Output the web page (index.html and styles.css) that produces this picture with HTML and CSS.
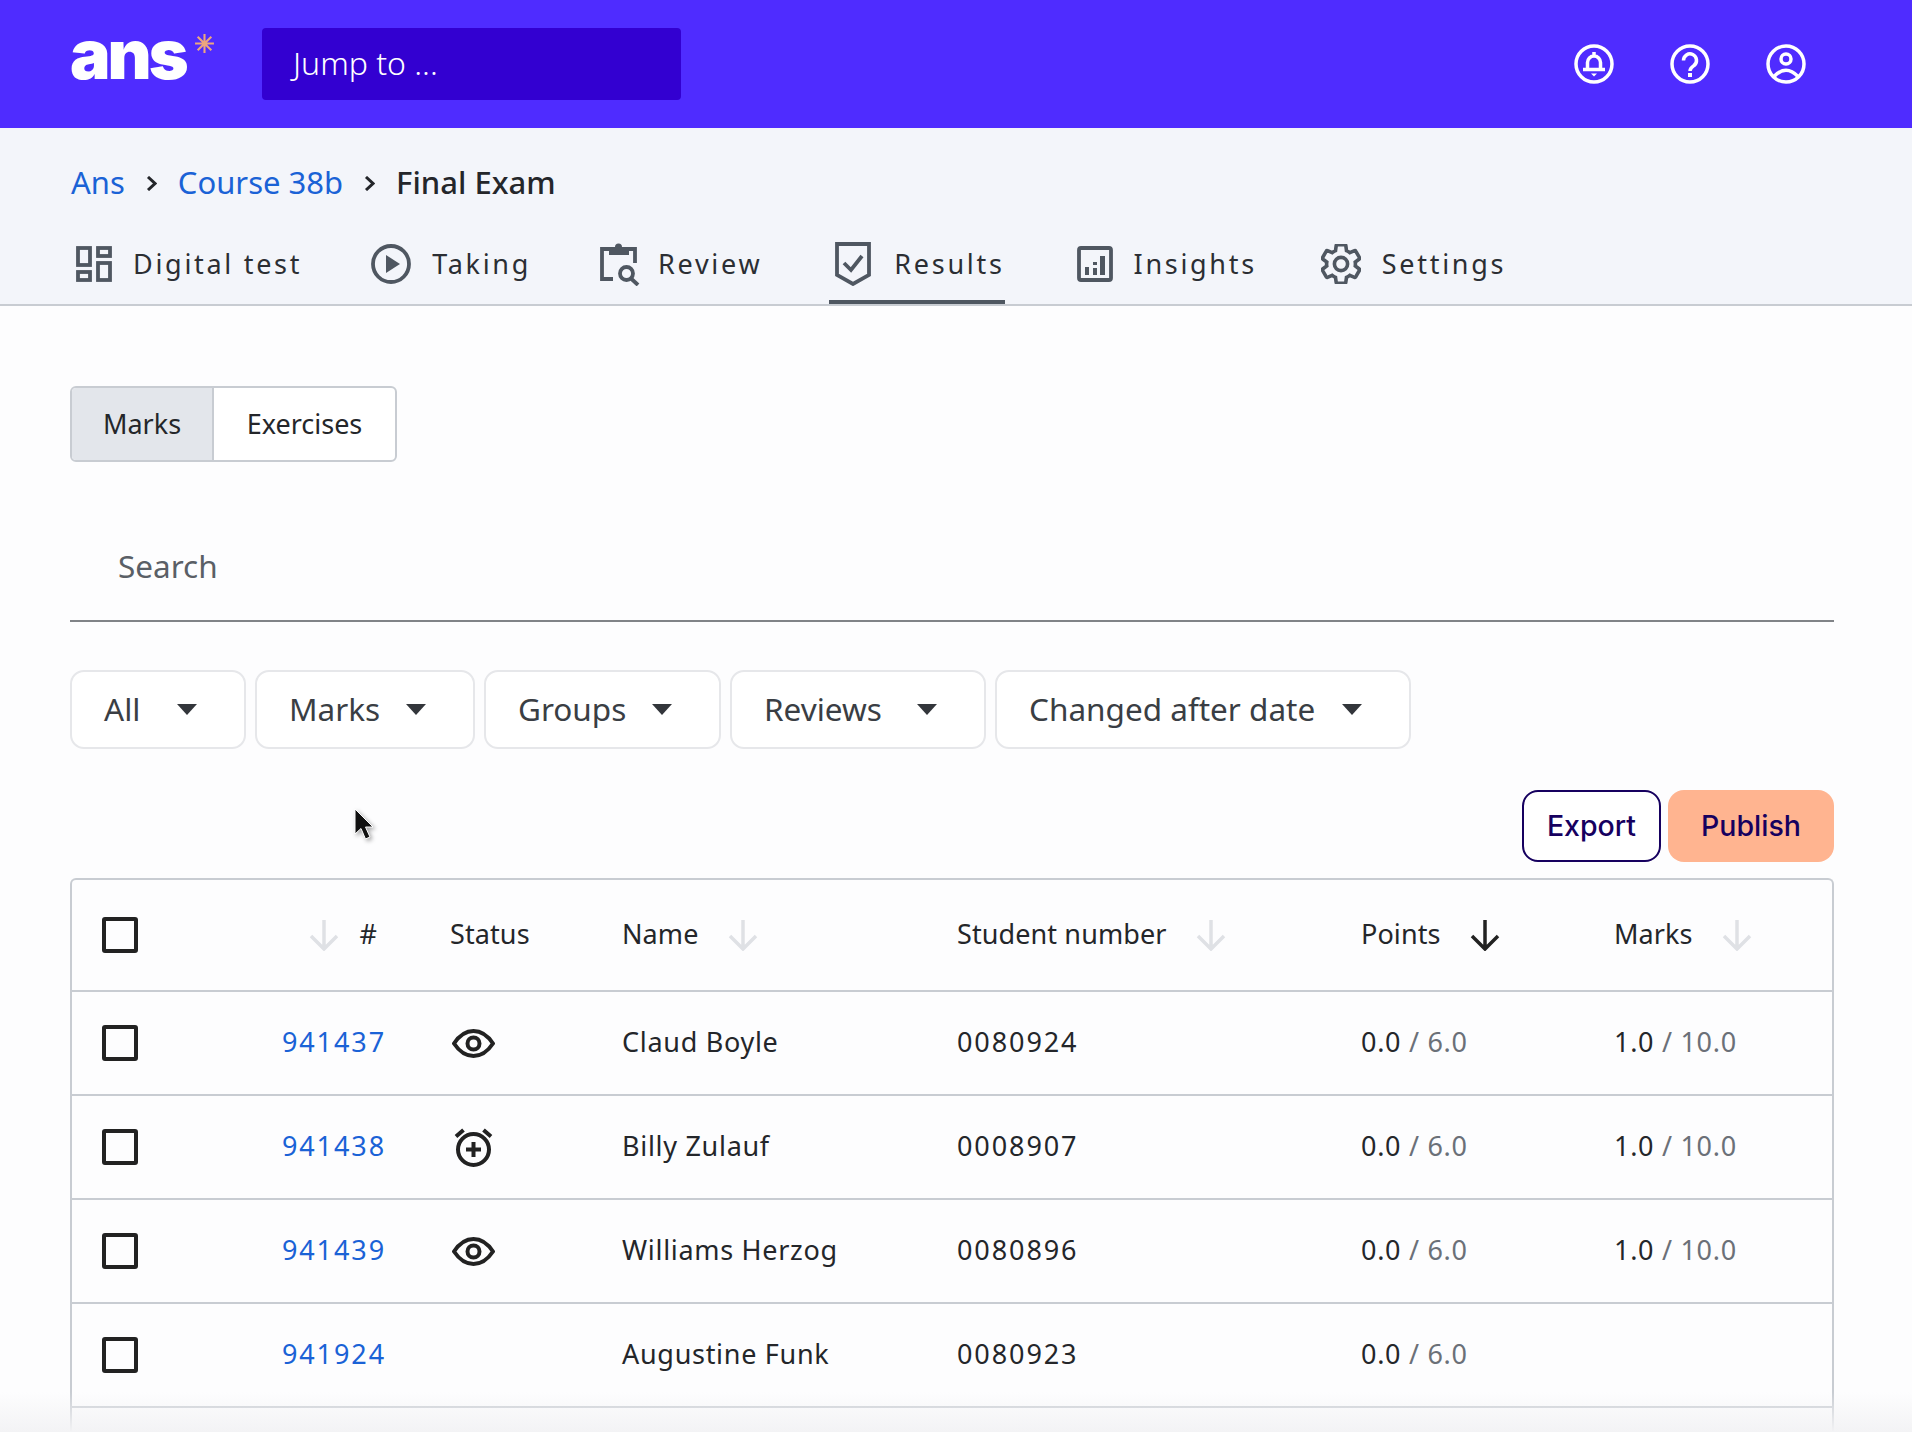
FILE: index.html
```html
<!DOCTYPE html>
<html>

<head>
    <meta charset="UTF-8">
    <link rel="stylesheet" href="styles.css">
    <title>Final Exam - Results</title>
</head>

<body>
    <header class="topbar">
        <div class="logo">
            <span class="logoText">ans</span>
            <svg class="logoStar" width="21" height="21" viewBox="0 0 20 20">
                <path d="M10 1V19M1 10H19M3.500 3.500L16.500 16.500M16.500 3.500L3.500 16.500" />
            </svg>
        </div>
        <div class="jumpTo">Jump to ...</div>
        <div class="topIcons">
            <svg width="40" height="40" viewBox="0 0 40 40">
                <circle cx="20" cy="20" r="18" />
                <path d="M13.500 25V18.500a6.500 6.500 0 0 1 13 0V25M9 25.500H31M20 8v4" />
                <path class="solid" d="M17 29.500H23L20 32.500Z" />
            </svg>
            <svg width="40" height="40" viewBox="0 0 40 40">
                <circle cx="20" cy="20" r="18" />
                <path d="M13.500 16.500a6.500 6.500 0 1 1 10.500 5c-2.500 1.800-4 2.800-4 5.500" />
                <rect class="solid" x="18" y="29" width="4" height="4" />
            </svg>
            <svg width="40" height="40" viewBox="0 0 40 40">
                <circle cx="20" cy="20" r="18" />
                <circle cx="20" cy="15" r="5" />
                <path d="M8 32.500Q20 20 32 32.500" />
            </svg>
        </div>
    </header>

    <div class="subnav">
        <div class="crumbs">
            <a class="link">Ans</a>
            <svg class="chevron" width="11" height="15" viewBox="0 0 11 15"><path d="M2 1L9 7.500L2 14" /></svg>
            <a class="link">Course 38b</a>
            <svg class="chevron" width="11" height="15" viewBox="0 0 11 15"><path d="M2 1L9 7.500L2 14" /></svg>
            <span class="current">Final Exam</span>
        </div>
        <nav class="tabs">
            <div class="tab">
                <svg width="36" height="36" viewBox="0 0 36 36">
                    <rect x="2" y="2" width="12" height="17" />
                    <rect x="22" y="2" width="12" height="8" />
                    <rect x="2" y="26" width="12" height="8" />
                    <rect x="22" y="17" width="12" height="17" />
                </svg>
                <span>Digital test</span>
            </div>
            <div class="tab">
                <svg width="40" height="40" viewBox="0 0 40 40">
                    <circle cx="20" cy="20" r="18" />
                    <path class="solid" d="M15 11L29 20L15 29Z" />
                </svg>
                <span>Taking</span>
            </div>
            <div class="tab">
                <svg class="reviewIcon" width="41" height="44" viewBox="0 0 41 44">
                    <path d="M11 7H2V37H13M27 7H35V21" />
                    <path class="solid" d="M9 5H15a3.500 3.500 0 0 1 7 0H29V13H9Z" />
                    <circle cx="26.500" cy="31.500" r="6.500" />
                    <path d="M31 36.500L38 43" />
                </svg>
                <span>Review</span>
            </div>
            <div class="tab selected">
                <svg class="resultsIcon" width="36" height="44" viewBox="0 0 36 44">
                    <path d="M2 2H34V33L18 42L2 33Z" />
                    <path d="M9 21L16 28L27 14" />
                </svg>
                <span>Results</span>
            </div>
            <div class="tab">
                <svg width="36" height="36" viewBox="0 0 36 36">
                    <rect x="2" y="2" width="32" height="32" rx="2" />
                    <rect class="solid" x="8" y="21" width="4" height="8" />
                    <rect class="solid" x="16" y="16" width="4" height="3" />
                    <rect class="solid" x="16" y="22" width="4" height="7" />
                    <rect class="solid" x="23" y="10" width="5" height="19" />
                </svg>
                <span>Insights</span>
            </div>
            <div class="tab settingsTab">
                <svg class="gear" width="40" height="40" viewBox="2 2 20 20">
                    <path d="M19.140 12.940c.04-.3.06-.61.06-.94 0-.32-.02-.64-.07-.94l2.030-1.580c.18-.14.23-.41.12-.61l-1.920-3.320c-.12-.22-.37-.29-.59-.22l-2.390.96c-.5-.38-1.030-.7-1.620-.94l-.36-2.540c-.04-.24-.24-.41-.48-.41h-3.840c-.24 0-.43.17-.47.41l-.36 2.540c-.59.24-1.130.57-1.620.94l-2.390-.96c-.22-.08-.47 0-.59.22L2.740 8.870c-.12.21-.08.47.12.61l2.030 1.580c-.05.3-.09.63-.09.94s.02.64.07.94l-2.030 1.580c-.18.14-.23.41-.12.61l1.920 3.320c.12.22.37.29.59.22l2.390-.96c.5.38 1.030.7 1.620.94l.36 2.540c.05.24.24.41.48.41h3.840c.24 0 .44-.17.47-.41l.36-2.540c.59-.24 1.130-.56 1.620-.94l2.390.96c.22.08.47 0 .59-.22l1.920-3.320c.12-.22.07-.47-.12-.61l-2.010-1.580z" />
                    <circle cx="12" cy="12" r="3.300" />
                </svg>
                <span>Settings</span>
            </div>
        </nav>
    </div>

    <main class="content">
        <div class="segment">
            <div class="segmentItem selected">Marks</div>
            <div class="segmentItem">Exercises</div>
        </div>

        <div class="search">Search</div>

        <div class="filters">
            <div class="filter">All<span class="caret"></span></div>
            <div class="filter">Marks<span class="caret"></span></div>
            <div class="filter">Groups<span class="caret"></span></div>
            <div class="filter">Reviews<span class="caret"></span></div>
            <div class="filter">Changed after date<span class="caret"></span></div>
        </div>

        <div class="actions">
            <div class="action export">Export</div>
            <div class="action publish">Publish</div>
        </div>

        <div class="tableWrapper">
            <table class="results">
                <thead>
                    <tr>
                        <th class="colCheck"><span class="checkbox"></span></th>
                        <th class="colId">
                            <div class="head headId">
                                <svg class="sort" width="32" height="32" viewBox="0 0 32 32"><path d="M16 1V30M3 17L16 30L29 17" /></svg>
                                <span>#</span>
                            </div>
                        </th>
                        <th class="colStatus"><div class="head"><span>Status</span></div></th>
                        <th class="colName">
                            <div class="head">
                                <span>Name</span>
                                <svg class="sort" width="32" height="32" viewBox="0 0 32 32"><path d="M16 1V30M3 17L16 30L29 17" /></svg>
                            </div>
                        </th>
                        <th class="colNumber">
                            <div class="head">
                                <span>Student number</span>
                                <svg class="sort" width="32" height="32" viewBox="0 0 32 32"><path d="M16 1V30M3 17L16 30L29 17" /></svg>
                            </div>
                        </th>
                        <th class="colPoints">
                            <div class="head">
                                <span>Points</span>
                                <svg class="sort active" width="32" height="32" viewBox="0 0 32 32"><path d="M16 1V30M3 17L16 30L29 17" /></svg>
                            </div>
                        </th>
                        <th class="colMarks">
                            <div class="head">
                                <span>Marks</span>
                                <svg class="sort" width="32" height="32" viewBox="0 0 32 32"><path d="M16 1V30M3 17L16 30L29 17" /></svg>
                            </div>
                        </th>
                    </tr>
                </thead>
                <tbody>
                    <tr>
                        <td class="iconCell"><span class="checkbox"></span></td>
                        <td class="idCell"><a class="link">941437</a></td>
                        <td class="iconCell">
                            <svg class="statusIcon" width="43" height="29" viewBox="0 0 43 29">
                                <path d="M2 14.500C8 5.500 15 2 21.500 2S35 5.500 41 14.500C35 23.500 28 27 21.500 27S8 23.500 2 14.500Z" />
                                <circle cx="21.500" cy="14.500" r="6" />
                            </svg>
                        </td>
                        <td>Claud Boyle</td>
                        <td class="number">0080924</td>
                        <td>0.0 <span class="muted">/ 6.0</span></td>
                        <td>1.0 <span class="muted">/ 10.0</span></td>
                    </tr>
                    <tr>
                        <td class="iconCell"><span class="checkbox"></span></td>
                        <td class="idCell"><a class="link">941438</a></td>
                        <td class="iconCell">
                            <svg class="statusIcon alarm" width="39" height="40" viewBox="0 0 39 40">
                                <circle cx="19.500" cy="22.500" r="15.500" />
                                <path d="M2 9.500L9.500 3M29.500 3L37 9.500M19.500 15V30M12 22.500H27" />
                            </svg>
                        </td>
                        <td>Billy Zulauf</td>
                        <td class="number">0008907</td>
                        <td>0.0 <span class="muted">/ 6.0</span></td>
                        <td>1.0 <span class="muted">/ 10.0</span></td>
                    </tr>
                    <tr>
                        <td class="iconCell"><span class="checkbox"></span></td>
                        <td class="idCell"><a class="link">941439</a></td>
                        <td class="iconCell">
                            <svg class="statusIcon" width="43" height="29" viewBox="0 0 43 29">
                                <path d="M2 14.500C8 5.500 15 2 21.500 2S35 5.500 41 14.500C35 23.500 28 27 21.500 27S8 23.500 2 14.500Z" />
                                <circle cx="21.500" cy="14.500" r="6" />
                            </svg>
                        </td>
                        <td>Williams Herzog</td>
                        <td class="number">0080896</td>
                        <td>0.0 <span class="muted">/ 6.0</span></td>
                        <td>1.0 <span class="muted">/ 10.0</span></td>
                    </tr>
                    <tr>
                        <td class="iconCell"><span class="checkbox"></span></td>
                        <td class="idCell"><a class="link">941924</a></td>
                        <td></td>
                        <td>Augustine Funk</td>
                        <td class="number">0080923</td>
                        <td>0.0 <span class="muted">/ 6.0</span></td>
                        <td></td>
                    </tr>
                    <tr class="blankRow">
                        <td colspan="7"></td>
                    </tr>
                </tbody>
            </table>
        </div>
    </main>

    <svg class="cursor" width="24" height="36" viewBox="0 0 24 36">
        <path d="M2 1V26L8 20.500L12.500 31L17 29L12.500 19H20Z" />
    </svg>
    <div class="bottomFade"></div>
</body>

</html>
```

FILE: styles.css
```css
* {
    box-sizing: border-box;
}

html,
body {
    height: 100%;
}

body {
    margin: 0;
    position: relative;
    overflow: hidden;
    background: #fdfdfe;
    color: #24262a;
    font-family: "Noto Sans", sans-serif;
    font-size: 27px;
}

.link {
    color: #1a62d6;
}

svg path,
svg circle,
svg rect {
    fill: none;
    stroke: currentColor;
    stroke-width: 3.5;
}

svg .solid {
    fill: currentColor;
    stroke: none;
}

/* top bar */
.topbar {
    height: 128px;
    padding: 0 106px 0 70px;
    display: flex;
    align-items: center;
    background: #4f2cff;
    color: white;
}

.logo {
    width: 192px;
    height: 72px;
    display: flex;
    align-items: flex-start;
}

.logoText {
    font-family: Inter, sans-serif;
    font-size: 68px;
    font-weight: 900;
    line-height: 72px;
    letter-spacing: -3px;
    margin-top: -10px;
}

.logoStar {
    margin: 5px 0 0 8px;
    color: #eda67e;
}

.logoStar path {
    stroke-width: 2;
}

.jumpTo {
    width: 419px;
    height: 72px;
    padding: 0 0 3px 31px;
    display: flex;
    align-items: center;
    background: #3300d1;
    border-radius: 4px;
    font-size: 32px;
    font-weight: 300;
}

.topIcons {
    margin-left: auto;
    display: flex;
    gap: 56px;
}

/* breadcrumb and tabs */
.subnav {
    height: 178px;
    padding: 35px 78px 0 71px;
    background: #f3f5fa;
    border-bottom: 2px solid #c8ccd2;
}

.crumbs {
    height: 40px;
    display: flex;
    align-items: center;
    gap: 21px;
    font-size: 31px;
    line-height: 38px;
}

.crumbs span,
.crumbs a {
    margin-bottom: 2px;
}

.current {
    font-weight: 500;
}

.chevron path {
    stroke-width: 3;
}

.tabs {
    margin: 22px 0 0 -1px;
    display: flex;
    gap: 63px;
}

.tab {
    height: 79px;
    padding: 6px 0 4px 6px;
    display: flex;
    align-items: center;
    gap: 21px;
    border-bottom: 4px solid transparent;
    color: #4f5761;
}

.tab svg path,
.tab svg circle,
.tab svg rect {
    stroke-width: 3.800;
}

.tab svg .solid {
    stroke: none;
}

.tab span {
    color: #2b2e33;
    font-size: 27px;
    letter-spacing: 2.700px;
}

.tab.selected {
    margin: 0 3px 0 4px;
    border-bottom-color: #4f5761;
}

.settingsTab {
    margin-left: -5px;
}

.tab .gear path,
.tab .gear circle {
    stroke-width: 1.800;
}

.reviewIcon {
    margin-right: -4px;
}

.resultsIcon {
    margin-right: 2px;
}

/* marks / exercises switch */
.content {
    padding: 80px 78px 0 70px;
}

.segment {
    width: 327px;
    height: 76px;
    display: flex;
    border: 2px solid #c8ccd2;
    border-radius: 6px;
    overflow: hidden;
    background: white;
}

.segmentItem {
    flex: 1;
    padding-bottom: 2px;
    display: flex;
    align-items: center;
    justify-content: center;
}

.segmentItem.selected {
    flex: 0 0 142px;
    background: #e3e6eb;
    border-right: 2px solid #c8ccd2;
}

.search {
    height: 110px;
    margin-top: 50px;
    padding: 0 0 2px 48px;
    display: flex;
    align-items: center;
    border-bottom: 2px solid #808387;
    color: #5a5f66;
    font-size: 31.500px;
}

/* filters */
.filters {
    margin-top: 48px;
    display: grid;
    grid-template-columns: 176px 220px 237px 256px 416px;
    gap: 9px;
}

.filter {
    height: 79px;
    padding: 0 47px 3px 32px;
    display: flex;
    align-items: center;
    border: 2px solid #e6e7ea;
    border-radius: 14px;
    background: white;
    color: #3a3e44;
    font-size: 31.500px;
}

.caret {
    margin: 3px 0 0 auto;
    border-top: 11px solid #33363b;
    border-left: 10px solid transparent;
    border-right: 10px solid transparent;
}

.actions {
    margin-top: 41px;
    display: flex;
    justify-content: flex-end;
    gap: 7px;
}

.action {
    height: 72px;
    padding-bottom: 2px;
    display: flex;
    align-items: center;
    justify-content: center;
    border-radius: 16px;
    color: #16005f;
    font-family: Inter, sans-serif;
    font-size: 28.500px;
    font-weight: 500;
}

.export {
    width: 139px;
    border: 2px solid #16005f;
    background: white;
}

.publish {
    width: 166px;
    background: #ffb490;
}

/* results table */
.tableWrapper {
    margin-top: 16px;
    border: 2px solid #c8ccd2;
    border-bottom: none;
    border-radius: 6px 6px 0 0;
}

.results {
    width: 100%;
    border-collapse: collapse;
    table-layout: fixed;
}

.results tr {
    height: 104px;
    border-bottom: 2px solid #c8ccd2;
}

.results thead tr {
    height: 111px;
}

.results .blankRow {
    height: 25px;
    border-bottom: none;
}

.results th,
.results td {
    padding: 0 0 3px 32px;
    text-align: left;
    font-weight: 400;
    vertical-align: middle;
    letter-spacing: 0.700px;
}

.results th {
    padding-bottom: 0;
    letter-spacing: 0.100px;
}

.results .blankRow td {
    padding: 0;
}

.results .iconCell {
    padding-bottom: 0;
}

.results .number {
    letter-spacing: 1.900px;
}

.results .colCheck {
    width: 168px;
    padding-left: 30px;
}

.results .iconCell:first-child {
    padding-left: 30px;
}

.colId {
    width: 178px;
}

.colStatus {
    width: 172px;
}

.colName {
    width: 335px;
}

.colNumber {
    width: 404px;
}

.colPoints {
    width: 253px;
}

.results td.idCell {
    padding-left: 0;
    padding-right: 32px;
    text-align: right;
    letter-spacing: 1.900px;
}

.head {
    display: flex;
    align-items: center;
    gap: 28px;
}

.head span {
    padding-bottom: 3px;
}

.headId {
    justify-content: flex-end;
    gap: 19px;
    padding-right: 41px;
}

.sort {
    color: #dfe1e5;
}

.sort.active {
    color: #222;
}

.checkbox {
    width: 36px;
    height: 36px;
    display: block;
    border: 4px solid #222;
    border-radius: 3px;
}

.statusIcon {
    display: block;
    margin-left: 2px;
    color: #222;
}

.statusIcon path,
.statusIcon circle {
    stroke-width: 4;
}

.alarm {
    margin-left: 4px;
}

.muted {
    color: #6b7078;
}

.cursor {
    position: absolute;
    left: 353px;
    top: 808px;
    filter: drop-shadow(2px 2px 2px rgba(0, 0, 0, 0.35));
}

.cursor path {
    fill: #111;
    stroke: white;
    stroke-width: 1;
}

.bottomFade {
    position: absolute;
    left: 0;
    right: 0;
    bottom: 0;
    height: 40px;
    background: linear-gradient(rgba(243, 243, 245, 0), #f3f3f5);
}
```
